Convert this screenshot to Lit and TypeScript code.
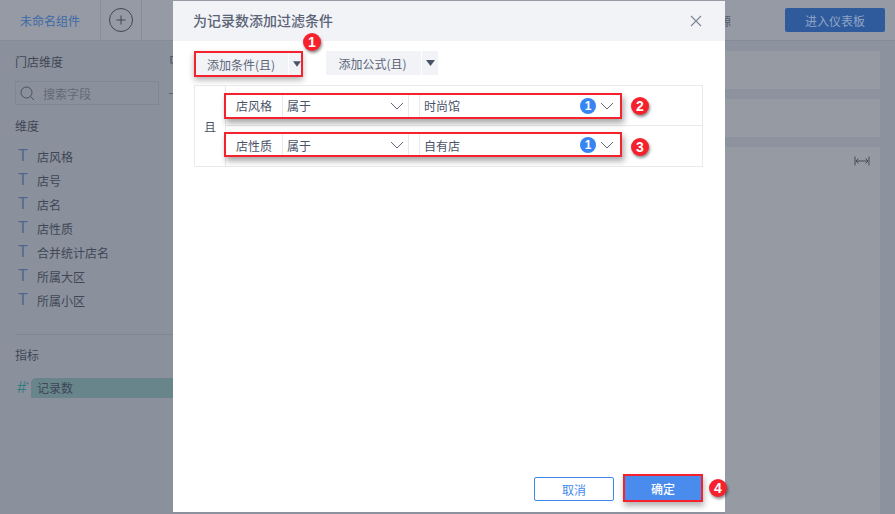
import { LitElement, html, css, svg } from "lit";
import { customElement } from "lit/decorators.js";

const chev = svg`<svg class="chev" width="14" height="8" viewBox="0 0 14 8"><path d="M1 1 L7 7 L13 1" fill="none" stroke="#5f6779" stroke-width="1"/></svg>`;
const close = svg`<svg width="12" height="12" viewBox="0 0 12 12"><path d="M1 1 L11 11 M11 1 L1 11" fill="none" stroke="#7d8595" stroke-width="1.1"/></svg>`;
const caret = svg`<svg width="9" height="6" viewBox="0 0 9 6"><path d="M0 0 H9 L4.5 6 Z" fill="#4a5368"/></svg>`;

@customElement("app-root")
export class AppRoot extends LitElement {
  static styles = css`
    :host { display: block; width: 895px; height: 514px; }
    * { box-sizing: border-box; }
    .page { position: relative; width: 895px; height: 514px; overflow: hidden; background: #8d939e;
      font-family: "Noto Sans CJK SC", "Liberation Sans", sans-serif; font-size: 12px; color: #3f4656; }

    .top { height: 41px; display: flex; align-items: center; background: #969aa4; border-bottom: 1px solid #868c97; }
    .tab { width: 101px; height: 40px; padding-left: 20px; display: flex; align-items: center; color: #3d69a8; border-right: 1px solid #888e99; }
    .plus { width: 41px; height: 40px; display: flex; align-items: center; justify-content: center; border-right: 1px solid #888e99; }
    .spacer { flex: 1; }
    .src { color: #565c6a; margin-right: 54px; }
    .enter { width: 100px; height: 24px; margin-right: 10px; border-radius: 2px; background: #2f5b9d; color: #8fa5c6; display: flex; align-items: center; justify-content: center; }

    .main { display: flex; height: 473px; }
    .side { width: 190px; padding: 11px 0 0 15px; background: #8b919c; display: flex; flex-direction: column; }
    .side-h { height: 20px; line-height: 20px; display: flex; align-items: center; justify-content: space-between; padding-right: 9px; }
    .s-row { margin-top: 9px; display: flex; align-items: center; justify-content: space-between; padding-right: 16px; }
    .search { width: 144px; height: 24px; border: 1px solid #828893; display: flex; align-items: center; gap: 8px; padding-left: 4px; color: #636976; }
    .minus { width: 4px; height: 1px; background: #5d6370; margin-right: 1px; }
    .group { margin-top: 11px; height: 20px; line-height: 20px; }
    .fields { margin-top: 10px; display: flex; flex-direction: column; gap: 4px; }
    .field { height: 20px; display: flex; align-items: center; gap: 9px; padding-left: 3px; }
    .t { width: 10px; font-size: 16px; color: #50668c; font-family: "Liberation Sans", sans-serif; line-height: 20px; }
    .split { margin-top: 24px; height: 11px; border-top: 1px solid #7f8591; display: flex; justify-content: center; }
    .grip { margin: 3px 0 0 -12px; width: 13px; height: 4px; background-image: radial-gradient(#4d5362 0.6px, transparent 0.7px); background-size: 3px 2px; }
    .m-head { height: 20px; line-height: 20px; }
    .measure { margin-top: 13px; display: flex; align-items: center; height: 20px; }
    .hash { width: 16px; padding-left: 2px; color: #2d7c80; font-size: 16px; font-family: "Liberation Sans", sans-serif; font-style: italic; white-space: nowrap; display: flex; }
    .ast { font-size: 7px; line-height: 12px; font-style: normal; color: #3a6f76; }
    .pill { flex: 1; height: 20px; line-height: 20px; background: #68858c; border-radius: 5px 0 0 0; padding-left: 6px; }

    .content { flex: 1; padding: 10px 15px 0 0; display: flex; flex-direction: column; align-items: flex-end; gap: 10px; }
    .box { width: 155px; height: 38px; background: #959aa3; }
    .box.big { flex: 1; display: flex; justify-content: flex-end; padding: 9px 10px 0 0; }

    .mask { position: absolute; left: 173px; top: 1px; width: 552px; height: 511px; }
    .dialog { width: 100%; height: 100%; background: #fff; display: flex; flex-direction: column; }
    .d-head { height: 40px; background: #f1f3f7; padding: 0 23px 3px 20px; display: flex; align-items: center; justify-content: space-between; flex: none; }
    .d-head svg { margin-top: 3px; }
    .d-title { font-size: 14px; line-height: 20px; font-weight: 500; color: #5b6376; }
    .d-body { flex: 1; padding: 10px 22px 0 21px; display: flex; flex-direction: column; }
    .adders { display: flex; height: 24px; padding-left: 2px; }
    .add { width: 92px; height: 22px; padding-right: 2px; background: #f1f3f7; display: flex; align-items: center; justify-content: center; color: #5b6376; }
    .add-c { width: 12px; height: 22px; margin-left: 1px; padding-left: 4px; background: #f1f3f7; display: flex; align-items: center; justify-content: center; }
    .first { display: flex; height: 22px; margin-top: 2px; box-shadow: 0 0 0 2px #f5222d, 0 3px 6px 2px rgba(0,0,0,.3); margin-right: 25px; }
    .add.f { width: 95px; height: 24px; }
    .add-c.f { width: 16px; height: 24px; padding-left: 0; }
    .t-wrap { margin-top: 10px; width: 509px; height: 82px; border: 1px solid #e8eaee; display: flex; }
    .and { width: 31px; flex: none; border-right: 1px solid #e8eaee; display: flex; align-items: center; justify-content: center; color: #4a5368; }
    .rows { flex: 1; display: flex; flex-direction: column; }
    .row { height: 41px; padding-top: 9px; }
    .row.one { border-bottom: 1px solid #e8eaee; }
    .row.two { padding-top: 8px; }
    .hl { width: 394px; height: 22px; display: flex; align-items: stretch; box-shadow: 0 0 0 2px #f5222d, 2px 4px 6px 2px rgba(0,0,0,.35); background: #fff; color: #4a5368; }
    .row.one .lab, .row.one .sel > span:first-child, .row.one .val > span:first-child { padding-bottom: 1px; }
    .row.two .hl { height: 21px; }
    .row.two .lab, .row.two .sel > span:first-child, .row.two .val > span:first-child { padding-top: 1px; }
    .lab { width: 56px; display: flex; align-items: center; justify-content: center; }
    .sel { width: 127px; border-left: 1px solid #e8eaee; border-right: 1px solid #e8eaee; padding: 0 4px 0 4px; display: flex; align-items: center; justify-content: space-between; }
    .val { flex: 1; margin-left: 10px; padding: 0 6px 0 4px; border-left: 1px solid #e8eaee; display: flex; align-items: center; justify-content: space-between; }
    .right { display: flex; align-items: center; gap: 4px; }
    .count { width: 16px; height: 16px; border-radius: 50%; background: #3685f2; color: #fff; font: 700 12px/16px "Liberation Sans", sans-serif; text-align: center; }
    .d-foot { height: 36px; flex: none; display: flex; justify-content: flex-end; gap: 11px; padding: 0 24px 12px 0; }
    .cancel { width: 80px; height: 24px; margin-top: 1px; border: 1px solid #3f88ee; border-radius: 2px; color: #3f88ee; display: flex; align-items: center; justify-content: center; }
    .ok { width: 76px; height: 24px; background: #4a8cee; color: #fff; font-weight: 500; display: flex; align-items: center; justify-content: center; box-shadow: 0 0 0 2px #f5222d, 1px 4px 6px 2px rgba(0,0,0,.3); }

    .badge { position: absolute; width: 18px; height: 18px; border-radius: 50%; background: #f5222d; color: #fff; font: 700 14px/18px "Liberation Sans", sans-serif; text-align: center; box-shadow: 1px 2px 3px rgba(0,0,0,.45); }
    .b1 { left: 303px; top: 33px; }
    .b2 { left: 631px; top: 97px; }
    .b3 { left: 631px; top: 138px; }
    .b4 { left: 709px; top: 479px; }
  `;

  private row(cls: string, lab: string, val: string) {
    return html`<div class="row ${cls}"><div class="hl">
      <div class="lab">${lab}</div>
      <div class="sel"><span>属于</span>${chev}</div>
      <div class="val"><span>${val}</span><span class="right"><span class="count">1</span>${chev}</span></div>
    </div></div>`;
  }

  render() {
    const fields = ["店风格", "店号", "店名", "店性质", "合并统计店名", "所属大区", "所属小区"];
    return html`<div class="page">
      <div class="top">
        <div class="tab">未命名组件</div>
        <div class="plus"><svg width="24" height="24" viewBox="0 0 24 24"><circle cx="12" cy="12" r="11.5" fill="none" stroke="#3f4656"/><path d="M12 7.5 V16.5 M7.5 12 H16.5" stroke="#3f4656"/></svg></div>
        <div class="spacer"></div>
        <div class="src">数据源</div>
        <div class="enter">进入仪表板</div>
      </div>
      <div class="main">
        <div class="side">
          <div class="side-h"><span>门店维度</span><svg width="11" height="14" viewBox="0 0 11 14"><path d="M1 1.5 H10 V8 H1 Z M3 9 L5 12 H8" fill="none" stroke="#4d5466" stroke-width="1.2"/></svg></div>
          <div class="s-row">
            <div class="search"><svg width="15" height="15" viewBox="0 0 15 15"><circle cx="6.5" cy="6.5" r="5.5" fill="none" stroke="#4a5060"/><path d="M10.5 10.5 L14 14" stroke="#4a5060"/></svg><span>搜索字段</span></div>
            <div class="minus"></div>
          </div>
          <div class="group">维度</div>
          <div class="fields">${fields.map((f) => html`<div class="field"><span class="t">T</span><span>${f}</span></div>`)}</div>
          <div class="split"><div class="grip"></div></div>
          <div class="m-head">指标</div>
          <div class="measure"><span class="hash">#<span class="ast">*</span></span><div class="pill">记录数</div></div>
        </div>
        <div class="content">
          <div class="box"></div>
          <div class="box"></div>
          <div class="box big"><svg width="16" height="10" viewBox="0 0 16 10"><path d="M1 0.5 V9.5 M15 0.5 V9.5 M2 5 H14 M4.5 2.5 L2 5 L4.5 7.5 M11.5 2.5 L14 5 L11.5 7.5" fill="none" stroke="#454b5a"/></svg></div>
        </div>
      </div>

      <div class="mask"><div class="dialog">
        <div class="d-head"><span class="d-title">为记录数添加过滤条件</span>${close}</div>
        <div class="d-body">
          <div class="adders">
            <div class="first"><div class="add">添加条件(且)</div><div class="add-c">${caret}</div></div>
            <div class="add f">添加公式(且)</div><div class="add-c f">${caret}</div>
          </div>
          <div class="t-wrap">
            <div class="and">且</div>
            <div class="rows">${this.row("one", "店风格", "时尚馆")}${this.row("two", "店性质", "自有店")}</div>
          </div>
        </div>
        <div class="d-foot"><div class="cancel">取消</div><div class="ok">确定</div></div>
      </div></div>

      <div class="badge b1">1</div><div class="badge b2">2</div><div class="badge b3">3</div><div class="badge b4">4</div>
    </div>`;
  }
}
